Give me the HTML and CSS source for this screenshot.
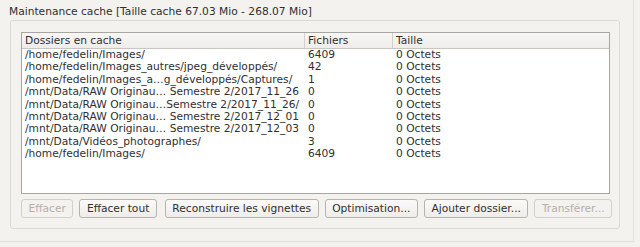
FILE: index.html
```html
<!DOCTYPE html>
<html lang="fr">
<head>
<meta charset="UTF-8">
<title>Maintenance cache</title>
<link rel="stylesheet" href="styles.css">
</head>
<body>

<div class="panel">

<div class="title">Maintenance cache [Taille cache 67.03 Mio - 268.07 Mio]</div>

<div class="group">

  <div class="table">
    <div class="head">
      <div class="cell col-path">Dossiers en cache</div>
      <div class="cell col-files">Fichiers</div>
      <div class="cell col-size">Taille</div>
    </div>
    <div class="body">
      <div class="row"><div class="cell col-path">/home/fedelin/Images/</div><div class="cell col-files">6409</div><div class="cell col-size">0 Octets</div></div>
      <div class="row"><div class="cell col-path">/home/fedelin/Images_autres/jpeg_développés/</div><div class="cell col-files">42</div><div class="cell col-size">0 Octets</div></div>
      <div class="row"><div class="cell col-path">/home/fedelin/Images_a…g_développés/Captures/</div><div class="cell col-files">1</div><div class="cell col-size">0 Octets</div></div>
      <div class="row"><div class="cell col-path">/mnt/Data/RAW Originau… Semestre 2/2017_11_26</div><div class="cell col-files">0</div><div class="cell col-size">0 Octets</div></div>
      <div class="row"><div class="cell col-path">/mnt/Data/RAW Originau…Semestre 2/2017_11_26/</div><div class="cell col-files">0</div><div class="cell col-size">0 Octets</div></div>
      <div class="row"><div class="cell col-path">/mnt/Data/RAW Originau… Semestre 2/2017_12_01</div><div class="cell col-files">0</div><div class="cell col-size">0 Octets</div></div>
      <div class="row"><div class="cell col-path">/mnt/Data/RAW Originau… Semestre 2/2017_12_03</div><div class="cell col-files">0</div><div class="cell col-size">0 Octets</div></div>
      <div class="row"><div class="cell col-path">/mnt/Data/Vidéos_photographes/</div><div class="cell col-files">3</div><div class="cell col-size">0 Octets</div></div>
      <div class="row"><div class="cell col-path">/home/fedelin/Images/</div><div class="cell col-files">6409</div><div class="cell col-size">0 Octets</div></div>
    </div>
  </div>

  <div class="buttons">
    <button type="button" class="btn" disabled>Effacer</button>
    <button type="button" class="btn btn-wide-gap">Effacer tout</button>
    <button type="button" class="btn">Reconstruire les vignettes</button>
    <button type="button" class="btn">Optimisation...</button>
    <button type="button" class="btn">Ajouter dossier...</button>
    <button type="button" class="btn" disabled>Transférer...</button>
  </div>

</div>

</div>

</body>
</html>
```

FILE: styles.css
```css
body {
  margin: 0;
  padding: 0;
  background-color: #f4f2ef;
  color: #2f2f2f;
  font-family: 'DejaVu Sans', sans-serif;
  font-size: 10.67px;
}
.panel {
  width: 634px;
  height: 242px;
  box-sizing: border-box;
  border-right: 1px solid #e2dfdb;
  border-bottom: 1px solid #e2dfdb;
}
.title {
  height: 14px;
  padding: 6px 0 0 9px;
  line-height: 12px;
  white-space: nowrap;
}
.group {
  margin-left: 10px;
  width: 610px;
  height: 209px;
  box-sizing: border-box;
  padding: 11px 9px 10px 10px;
  border: 1px solid #dcd9d4;
  border-radius: 3px;
}
.table {
  height: 162px;
  box-sizing: border-box;
  border: 1px solid #a9a6a2;
  background-color: #fff;
}
.head {
  display: flex;
  background: linear-gradient(#f8f7f5, #efedea);
  border-bottom: 1px solid #c9c6c2;
}
.head .cell {
  padding: 2px 3px 1px;
  line-height: 12px;
}
.head .cell + .cell {
  border-left: 1px solid #d3d0cc;
}
.row {
  display: flex;
  line-height: 12.4px;
}
.row .cell + .cell {
  border-left: 1px solid transparent;
}
.cell {
  padding: 0 3px;
  white-space: nowrap;
  overflow: hidden;
}
.col-path {
  width: 282px;
  box-sizing: border-box;
}
.col-files {
  width: 88px;
  box-sizing: border-box;
}
.col-size {
  flex: 1;
}
.buttons {
  display: flex;
  gap: 6px;
  margin-top: 5px;
}
.btn {
  height: 19px;
  padding: 0 6.5px;
  border: 1px solid #b7b3ae;
  border-radius: 3px;
  background: linear-gradient(#fbfaf9, #efedea);
  color: #2f2f2f;
  font-family: 'DejaVu Sans', sans-serif;
  font-size: 10.67px;
  line-height: 13px;
  white-space: nowrap;
}
.btn:disabled {
  color: #b3afab;
  border-color: #d3d0cb;
  background: #f4f2ef;
}
.btn-wide-gap {
  margin-right: 2px;
}
```
